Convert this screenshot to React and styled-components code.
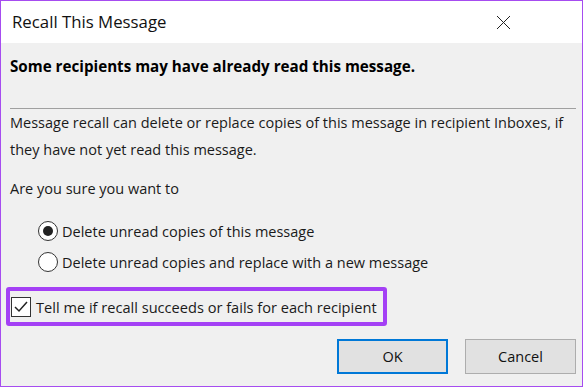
import React from "react";
import styled, { createGlobalStyle } from "styled-components";

const GlobalStyle = createGlobalStyle`
    html, body {
        margin:0;
        padding:0;
        background:#f0f0f0;
    }
    * { box-sizing:border-box; }
`

const Window = styled.div`
    width:583px;
    height:387px;
    border:1px solid #a64cf0;
    background:#f0f0f0;
    display:flex;
    flex-direction:column;
    font-family:"Open Sans", "Noto Sans", sans-serif;
    color:#1a1a1a;
`

const TitleBar = styled.div`
    height:42px;
    background:#fff;
    display:flex;
    align-items:center;
    justify-content:space-between;
    padding:0 0 0 11px;
`

const Title = styled.span`
    font-size:16.8px;
    color:#111;
    margin-top:-2px;
`

const Close = styled.button`
    width:46px;
    height:42px;
    border:none;
    background:transparent;
    display:flex;
    align-items:center;
    justify-content:center;
    padding:0;
    margin-right:56px;
`

const Content = styled.div`
    flex:1;
    display:flex;
    flex-direction:column;
    padding:0 6px 0 9px;
`

const Warning = styled.div`
    font-weight:700;
    font-size:15.2px;
    margin-top:13px;
    color:#000;
`

const Rule = styled.hr`
    border:none;
    border-top:1px solid #a0a0a0;
    margin:32px 0 0 0;
`

const Text = styled.p`
    font-size:14.5px;
    line-height:27px;
    margin:${p => p.$top}px 0 0 0;
`

const Options = styled.div`
    display:flex;
    flex-direction:column;
    gap:9px;
    margin:18px 0 0 28px;
`

const Option = styled.label`
    display:flex;
    align-items:center;
    gap:4px;
    font-size:14.5px;
    height:22px;
`

const Radio = styled.span`
    width:20px;
    height:20px;
    border-radius:50%;
    border:1px solid #333;
    background:#fff;
    display:flex;
    align-items:center;
    justify-content:center;
    &::after {
        content:"";
        width:10px;
        height:10px;
        border-radius:50%;
        background:#222;
        display:${p => (p.$on ? "block" : "none")};
    }
`

const Highlight = styled.div`
    align-self:flex-start;
    margin:14px 0 0 -4px;
    border:4px solid #a440f5;
    border-radius:3px;
    padding:6px 6px 5px 1px;
    display:flex;
    align-items:center;
    gap:5px;
    font-size:14.6px;
`

const Check = styled.span`
    width:20px;
    height:20px;
    border:1px solid #333;
    background:#fff;
    display:flex;
    align-items:center;
    justify-content:center;
`

const Buttons = styled.div`
    display:flex;
    justify-content:flex-end;
    gap:17px;
    margin-top:auto;
    padding-bottom:12px;
`

const Button = styled.button`
    width:111px;
    height:35px;
    font-family:inherit;
    font-size:14.5px;
    color:#111;
    background:#e1e1e1;
    border:${p => (p.$primary ? "2px solid #0078d7" : "1px solid #adadad")};
    padding:0;
`

export default function App() {
    return (
        <>
            <GlobalStyle />
            <Window>
                <TitleBar>
                    <Title>Recall This Message</Title>
                    <Close aria-label="Close">
                        <svg width="15" height="15" viewBox="0 0 15 15">
                            <path d="M1 1 L14 14 M14 1 L1 14" stroke="#222" strokeWidth="1" fill="none" />
                        </svg>
                    </Close>
                </TitleBar>
                <Content>
                    <Warning>Some recipients may have already read this message.</Warning>
                    <Rule />
                    <Text $top={0}>
                        Message recall can delete or replace copies of this message in recipient Inboxes, if
                        they have not yet read this message.
                    </Text>
                    <Text $top={12}>Are you sure you want to</Text>
                    <Options>
                        <Option>
                            <Radio $on />
                            Delete unread copies of this message
                        </Option>
                        <Option>
                            <Radio />
                            Delete unread copies and replace with a new message
                        </Option>
                    </Options>
                    <Highlight>
                        <Check>
                            <svg width="16" height="14" viewBox="0 0 16 14">
                                <path d="M2 7 L6 11 L14 2" stroke="#222" strokeWidth="1.5" fill="none" />
                            </svg>
                        </Check>
                        Tell me if recall succeeds or fails for each recipient
                    </Highlight>
                    <Buttons>
                        <Button $primary>OK</Button>
                        <Button>Cancel</Button>
                    </Buttons>
                </Content>
            </Window>
        </>
    );
}
